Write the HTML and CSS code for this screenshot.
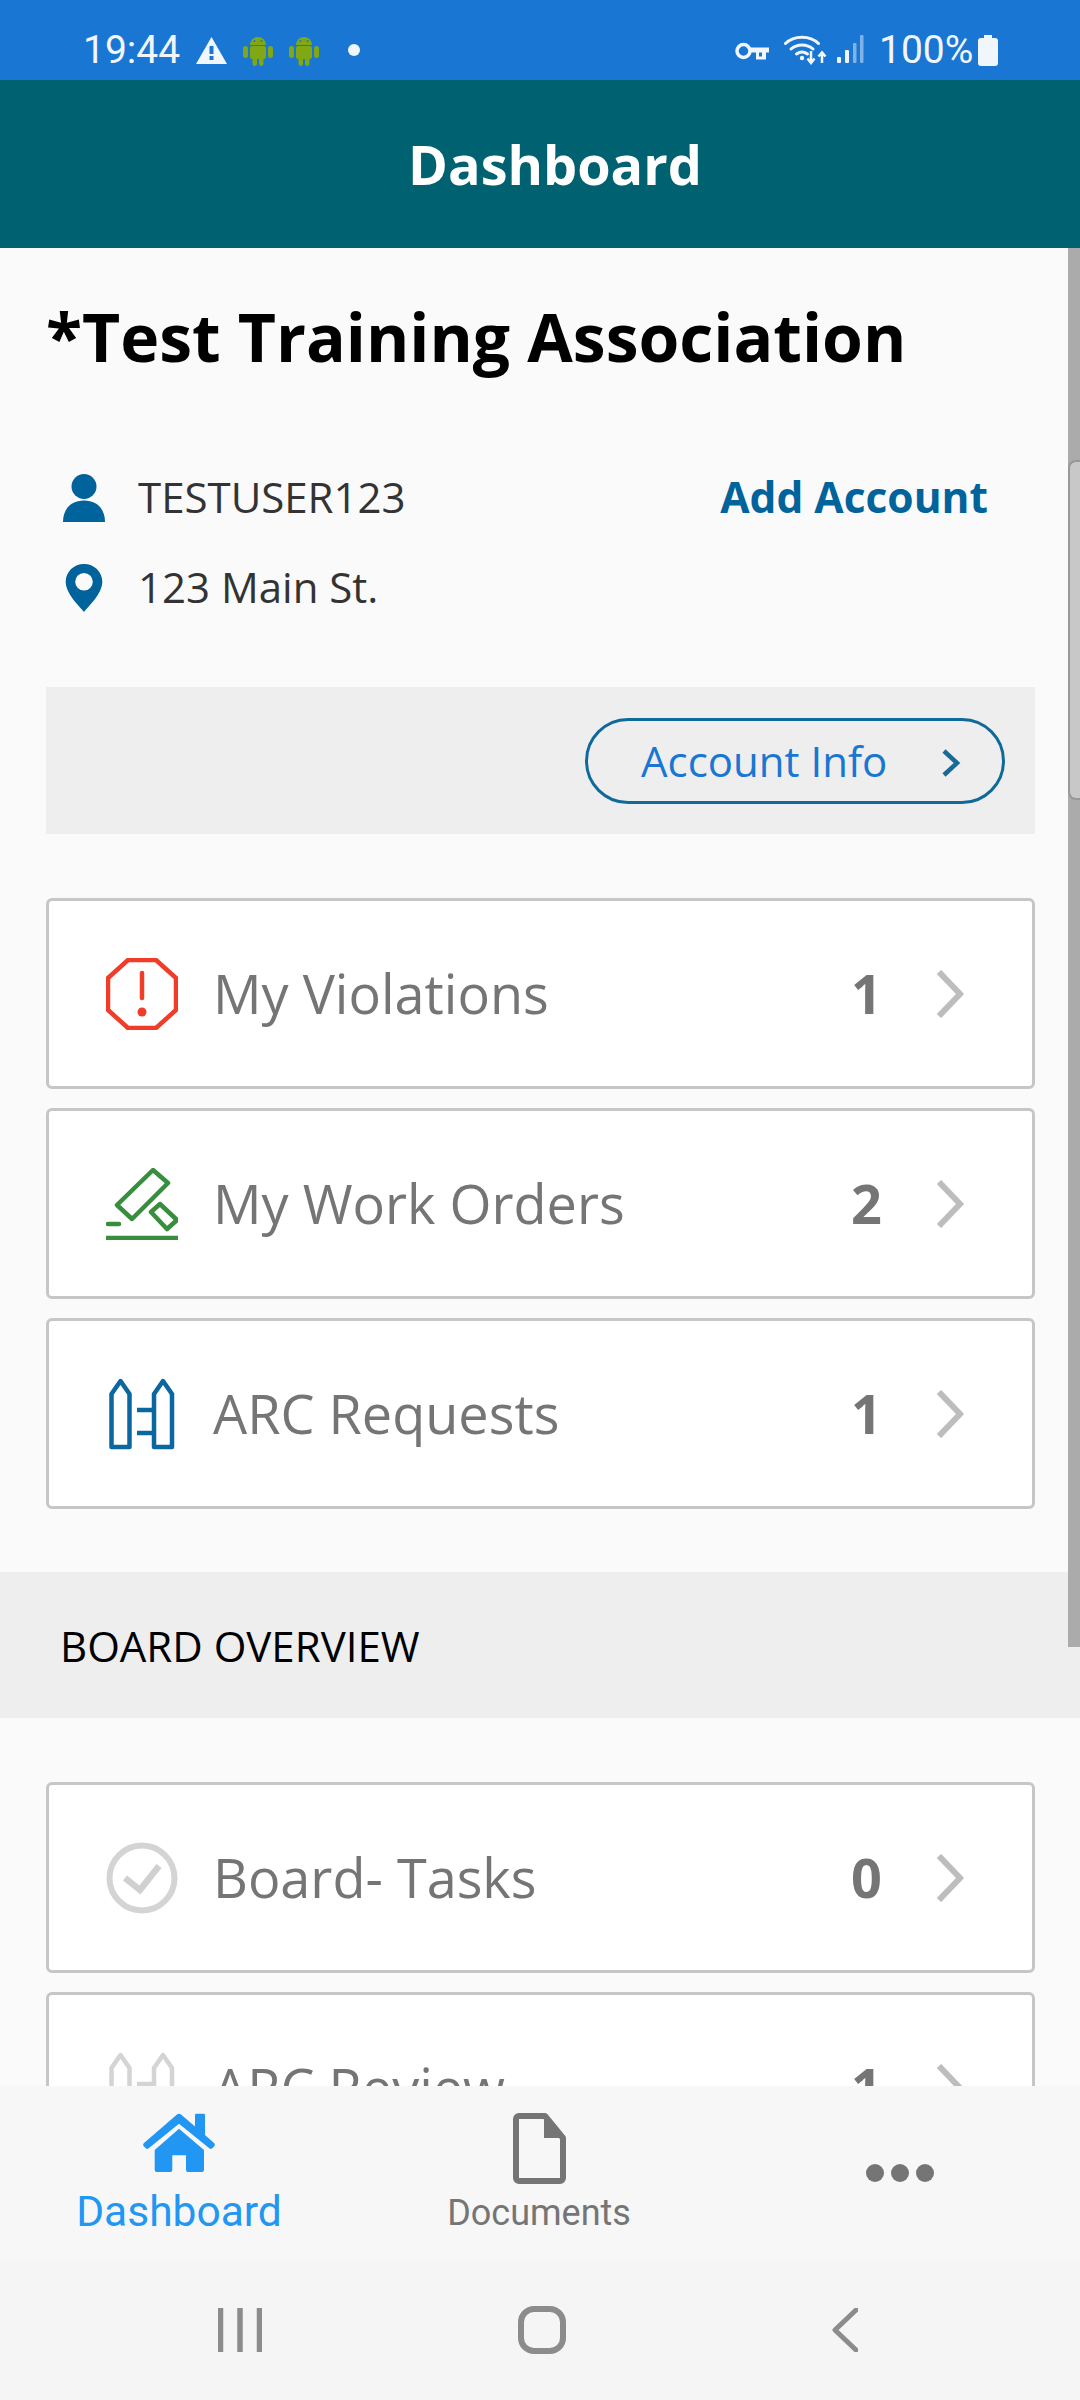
FILE: index.html
```html
<!DOCTYPE html>
<html lang="en">
<head>
<meta charset="utf-8">
<title>Dashboard</title>
<link rel="stylesheet" href="styles.css">
</head>
<body>
<div class="screen">
  <div class="status">
    <span class="clock">19:44</span>
    <svg class="s-warn" viewBox="0 0 31 27"><path d="M15.5 0 31 27H0z" fill="#f1f6fd"/><rect x="13.5" y="9" width="4" height="8" fill="#1976d2"/><rect x="13.5" y="19" width="4" height="4" fill="#1976d2"/></svg>
    <svg class="s-droid" viewBox="0 0 30 32"><g fill="#7fa814"><path d="M7 11a8 8 0 0 1 16 0z"/><rect x="7" y="12" width="16" height="13" rx="2"/><rect x="0" y="12" width="5" height="12" rx="2.5"/><rect x="25" y="12" width="5" height="12" rx="2.5"/><rect x="9.500" y="22" width="4.500" height="10" rx="2.200"/><rect x="16" y="22" width="4.500" height="10" rx="2.200"/></g><circle cx="11.500" cy="7" r="1" fill="#1976d2"/><circle cx="18.500" cy="7" r="1" fill="#1976d2"/></svg>
    <svg class="s-droid s-droid2" viewBox="0 0 30 32"><g fill="#7fa814"><path d="M7 11a8 8 0 0 1 16 0z"/><rect x="7" y="12" width="16" height="13" rx="2"/><rect x="0" y="12" width="5" height="12" rx="2.5"/><rect x="25" y="12" width="5" height="12" rx="2.5"/><rect x="9.500" y="22" width="4.500" height="10" rx="2.200"/><rect x="16" y="22" width="4.500" height="10" rx="2.200"/></g><circle cx="11.500" cy="7" r="1" fill="#1976d2"/><circle cx="18.500" cy="7" r="1" fill="#1976d2"/></svg>
    <span class="s-dot"></span>
    <span class="s-spacer"></span>
    <svg class="s-key" viewBox="0 0 34 18"><circle cx="8.500" cy="9" r="6.500" fill="none" stroke="#f1f6fd" stroke-width="3.500"/><path d="M15 5.500h19v5h-3v7h-10v-7h-6z" fill="#f1f6fd"/><rect x="24" y="10.500" width="3" height="4" fill="#1976d2"/></svg>
    <svg class="s-wifi" viewBox="0 0 43 32"><g fill="none" stroke="#f1f6fd" stroke-width="3" stroke-linecap="round"><path d="M1.500 10.500C10 2 26 2 34.500 10.500"/><path d="M7 16c6-5.500 16-5.500 22 0"/><path d="M12.500 21c3.500-2.500 7.500-2.500 11 0"/></g><circle cx="18" cy="25" r="2.200" fill="#f1f6fd"/><path d="M27 18v11M23.500 25.500l3.500 4.500 3.500-4.500M38 30V20M34.500 23.500l3.500-4 3.500 4" fill="none" stroke="#f1f6fd" stroke-width="2.500"/></svg>
    <svg class="s-signal" viewBox="0 0 27 28"><rect x="0" y="22" width="4" height="6" rx="1" fill="#f1f6fd"/><rect x="8" y="15" width="4" height="13" rx="1" fill="#f1f6fd"/><rect x="16" y="8" width="3.500" height="20" rx="1" fill="#7fb2e8"/><rect x="23" y="0" width="3.500" height="28" rx="1" fill="#7fb2e8"/></svg>
    <span class="s-batt-text">100%</span>
    <svg class="s-batt" viewBox="0 0 20 31"><path d="M6 0h8v3h3a3 3 0 0 1 3 3v22a3 3 0 0 1-3 3H3a3 3 0 0 1-3-3V6a3 3 0 0 1 3-3h3z" fill="#f1f6fd"/></svg>
  </div>

  <header class="topbar"><h1 class="topbar-title">Dashboard</h1></header>

  <main class="main">
    <section class="account">
      <h2 class="assoc">*Test Training Association</h2>
      <div class="info-row">
        <svg class="info-icon" viewBox="0 0 42 48"><ellipse cx="21" cy="12.500" rx="12.500" ry="12.500" fill="#00639b"/><path d="M0 48C0 35 8 26.500 21 26.500S42 35 42 48z" fill="#00639b"/></svg>
        <span class="info-text">TESTUSER123</span>
        <a class="add-link">Add Account</a>
      </div>
      <div class="info-row">
        <svg class="info-icon" viewBox="0 0 42 48"><path fill-rule="evenodd" d="M21 0c10 0 18.300 7.500 18.300 17.800C39.300 29 27 41 21 48 15 41 2.700 29 2.700 17.800 2.700 7.500 11 0 21 0zm0 9a8.800 8.800 0 1 0 0 17.600A8.800 8.800 0 0 0 21 9z" fill="#00639b"/></svg>
        <span class="info-text">123 Main St.</span>
      </div>
      <div class="info-band">
        <a class="pill">
          <span class="pill-text">Account Info</span>
          <svg class="pill-chev" viewBox="0 0 20 28"><path d="M3 2l13 12L3 26" fill="none" stroke="#1a6a96" stroke-width="4.500"/></svg>
        </a>
      </div>
    </section>

    <section class="cards">
      <a class="card">
        <svg class="card-icon" viewBox="0 0 72 72"><path d="M22 2h28l20 18v32L50 70H22L2 52V20z" fill="none" stroke="#f03c28" stroke-width="4.500"/><path d="M36 15v25" stroke="#f03c28" stroke-width="4.500" stroke-linecap="round"/><circle cx="36" cy="54" r="4.500" fill="#f03c28"/></svg>
        <span class="card-label">My Violations</span><span class="card-count">1</span>
        <svg class="card-chev" viewBox="0 0 30 48"><path d="M4 2l21 22L4 46" fill="none" stroke="#bdbdbd" stroke-width="6"/></svg>
      </a>
      <a class="card">
        <svg class="card-icon" viewBox="0 0 72 72"><g fill="none" stroke="#388e3c" stroke-width="4.500" stroke-linejoin="round"><path d="M47 2 62 15 26 51 11 37z"/><path d="M54 36 71 52 61 61 45 44z"/></g><path d="M2 56h11M0 70h72" stroke="#388e3c" stroke-width="4.500" stroke-linecap="round" fill="none"/></svg>
        <span class="card-label">My Work Orders</span><span class="card-count">2</span>
        <svg class="card-chev" viewBox="0 0 30 48"><path d="M4 2l21 22L4 46" fill="none" stroke="#bdbdbd" stroke-width="6"/></svg>
      </a>
      <a class="card">
        <svg class="card-icon" viewBox="0 0 72 72"><g fill="none" stroke="#0b67a0" stroke-width="4.500" stroke-linejoin="round"><path d="M5.500 69V16L14.500 3l9 13v53z"/><path d="M48 69V16L57 3l9 13v53z"/><path d="M31 32h17M31 55h17"/></g></svg>
        <span class="card-label">ARC Requests</span><span class="card-count">1</span>
        <svg class="card-chev" viewBox="0 0 30 48"><path d="M4 2l21 22L4 46" fill="none" stroke="#bdbdbd" stroke-width="6"/></svg>
      </a>
    </section>

    <div class="band"><span class="band-title">BOARD OVERVIEW</span></div>

    <section class="cards">
      <a class="card">
        <svg class="card-icon" viewBox="0 0 72 72"><circle cx="36" cy="36" r="32.500" fill="none" stroke="#d4d4d4" stroke-width="6"/><path d="M19 36l15 12 19-24" fill="none" stroke="#d0d0d0" stroke-width="6.500"/></svg>
        <span class="card-label">Board- Tasks</span><span class="card-count">0</span>
        <svg class="card-chev" viewBox="0 0 30 48"><path d="M4 2l21 22L4 46" fill="none" stroke="#bdbdbd" stroke-width="6"/></svg>
      </a>
      <a class="card">
        <svg class="card-icon" viewBox="0 0 72 72"><g fill="none" stroke="#d4d4d4" stroke-width="4.500" stroke-linejoin="round"><path d="M5.500 69V16L14.500 3l9 13v53z"/><path d="M48 69V16L57 3l9 13v53z"/><path d="M31 32h17M31 55h17"/></g></svg>
        <span class="card-label">ARC Review</span><span class="card-count">1</span>
        <svg class="card-chev" viewBox="0 0 30 48"><path d="M4 2l21 22L4 46" fill="none" stroke="#bdbdbd" stroke-width="6"/></svg>
      </a>
    </section>

    <div class="scroll-track"><div class="scroll-thumb"></div></div>
  </main>

  <nav class="tabs">
    <a class="tab tab-active">
      <svg class="tab-home" viewBox="0 0 72 59"><path d="M36 .7a3 3 0 0 1 2 .8L52 13.500V2a1.300 1.300 0 0 1 1.300-1.300h7.400A1.300 1.300 0 0 1 62 2v20l9 8a2.500 2.500 0 0 1 0 3.500l-1.500 1.500a2.500 2.500 0 0 1-3.500 0L36 10.700 6 35a2.500 2.500 0 0 1-3.500 0L1 33.500A2.500 2.500 0 0 1 1 30L34 1.500a3 3 0 0 1 2-.8z" fill="#2196f3"/><path d="M36 15.700 61 37v20a2 2 0 0 1-2 2H45a2 2 0 0 1-2-2V42.300H29.300V57a2 2 0 0 1-2 2H13.700a2 2 0 0 1-2-2V37z" fill="#2196f3"/></svg>
      <span class="tab-label-main">Dashboard</span>
    </a>
    <a class="tab tab-docs">
      <svg class="tab-doc" viewBox="0 0 53 71"><path d="M6 3h26l18 22v40a3 3 0 0 1-3 3H6a3 3 0 0 1-3-3V6a3 3 0 0 1 3-3z" fill="none" stroke="#757575" stroke-width="6" stroke-linejoin="round"/><path d="M31 3v22h19z" fill="#757575"/></svg>
      <span class="tab-label">Documents</span>
    </a>
    <a class="tab tab-more">
      <span class="dot"></span><span class="dot"></span><span class="dot"></span>
    </a>
  </nav>

  <div class="sysnav">
    <svg class="sys-recent" viewBox="0 0 44 44"><path d="M2.500 1v42M22 1v42M41.500 1v42" stroke="#8c8c8c" stroke-width="5.500" stroke-linecap="round"/></svg>
    <svg class="sys-home" viewBox="0 0 48 48"><rect x="3" y="3" width="42" height="42" rx="13" fill="none" stroke="#8c8c8c" stroke-width="6"/></svg>
    <svg class="sys-back" viewBox="0 0 26 44"><path d="M24 2 3 22l21 20" fill="none" stroke="#8c8c8c" stroke-width="5" stroke-linecap="round" stroke-linejoin="round"/></svg>
  </div>
</div>
</body>
</html>
```
FILE: styles.css
```css
* { box-sizing: border-box; }
html, body { margin: 0; padding: 0; }
body { width: 1080px; height: 2400px; overflow: hidden; font-family: "Open Sans", sans-serif; }
.screen { width: 1080px; height: 2400px; display: flex; flex-direction: column; background: #fafafa; }

.status { height: 80px; flex: none; background: #1976d2; display: flex; align-items: center; padding: 20px 82px 0 83px; color: #f1f6fd; font-family: Roboto, sans-serif; }
.clock { font-size: 39px; width: 113px; }
.s-warn { width: 31px; height: 27px; }
.s-droid { width: 30px; height: 32px; margin-left: 16px; }
.s-dot { width: 12px; height: 12px; border-radius: 50%; background: #f1f6fd; margin-left: 29px; }
.s-spacer { flex: 1; }
.s-key { width: 34px; height: 18px; margin-top: 2px; }
.s-wifi { width: 43px; height: 32px; margin-left: 15px; margin-top: -2px; }
.s-signal { width: 27px; height: 28px; margin-left: 10px; margin-top: -2px; }
.s-batt-text { font-size: 39px; margin-left: 15px; width: 99px; }
.s-batt { width: 20px; height: 31px; }

.topbar { height: 168px; flex: none; background: #006170; display: flex; align-items: center; justify-content: center; }
.topbar-title { margin: 0 0 0 30px; font-size: 54px; font-weight: 700; color: #fff; }

.main { flex: 1; min-height: 0; overflow: hidden; position: relative; background: #fafafa; }

.account { padding: 58px 45px 0 46px; }
.assoc { margin: 0 0 87px; font-size: 66px; line-height: 60px; font-weight: 700; color: #000; }
.info-row { height: 90px; display: flex; align-items: center; padding-left: 17px; }
.info-icon { width: 42px; height: 48px; flex: none; }
.info-text { margin-left: 33px; font-size: 42px; color: #333; padding-bottom: 3px; }
.add-link { margin-left: auto; margin-right: 47px; font-size: 42.5px; font-weight: 700; color: #00639b; padding-bottom: 3px; }
.info-band { height: 147px; margin-top: 54px; background: #eee; display: flex; align-items: center; justify-content: flex-end; padding-right: 30px; }
.pill { width: 420px; height: 86px; border: 3px solid #0f6a9a; border-radius: 43px; display: flex; align-items: center; padding-left: 53px; }
.pill-text { font-size: 42px; color: #1976d2; }
.pill-chev { width: 20px; height: 30px; margin-left: 54px; margin-top: 4px; }

.cards { padding: 0 45px 0 46px; display: flex; flex-direction: column; gap: 19px; margin-top: 64px; }
.card { height: 191px; background: #fff; border: 3px solid #c6c6c6; border-radius: 6px; display: flex; align-items: center; padding-left: 57px; }
.card-icon { width: 72px; height: 72px; flex: none; }
.card-label { margin-left: 35px; font-size: 54px; color: #757575; padding-bottom: 2px; }
.card-count { margin-left: auto; font-size: 54px; font-weight: 700; color: #757575; width: 84px; padding-bottom: 2px; }
.card-chev { width: 30px; height: 48px; margin-right: 67px; flex: none; }

.band { height: 146px; margin-top: 63px; background: #eee; display: flex; align-items: center; padding-left: 60px; }
.band-title { font-size: 42px; color: #000; }

.scroll-track { position: absolute; top: 0; right: 0; width: 12px; height: 1399px; background: #ababab; padding-top: 212px; }
.scroll-thumb { height: 340px; background: #c8c8c8; border: 2px solid #989898; border-right: none; border-radius: 8px 0 0 8px; }

.tabs { height: 174px; flex: none; background: #f7f7f7; display: grid; grid-template-columns: 358px 362px 360px; }
.tab { display: flex; flex-direction: column; align-items: center; }
.tab-home { width: 72px; height: 59px; margin-top: 27px; }
.tab-label-main { font-family: Roboto, sans-serif; font-size: 42.500px; line-height: 50px; margin-top: 15px; color: #2196f3; }
.tab-doc { width: 53px; height: 71px; margin-top: 27px; }
.tab-label { font-family: Roboto, sans-serif; font-size: 36px; line-height: 40px; margin-top: 9px; color: #757575; }
.tab-more { flex-direction: row; justify-content: center; gap: 7px; padding-top: 78px; align-items: flex-start; }
.dot { width: 18px; height: 18px; border-radius: 50%; background: #757575; }

.sysnav { height: 140px; flex: none; background: #f5f5f5; display: flex; align-items: center; }
.sys-recent { width: 44px; height: 44px; margin-left: 218px; }
.sys-home { width: 48px; height: 48px; margin-left: 256px; }
.sys-back { width: 26px; height: 44px; margin-left: 266px; }
```
